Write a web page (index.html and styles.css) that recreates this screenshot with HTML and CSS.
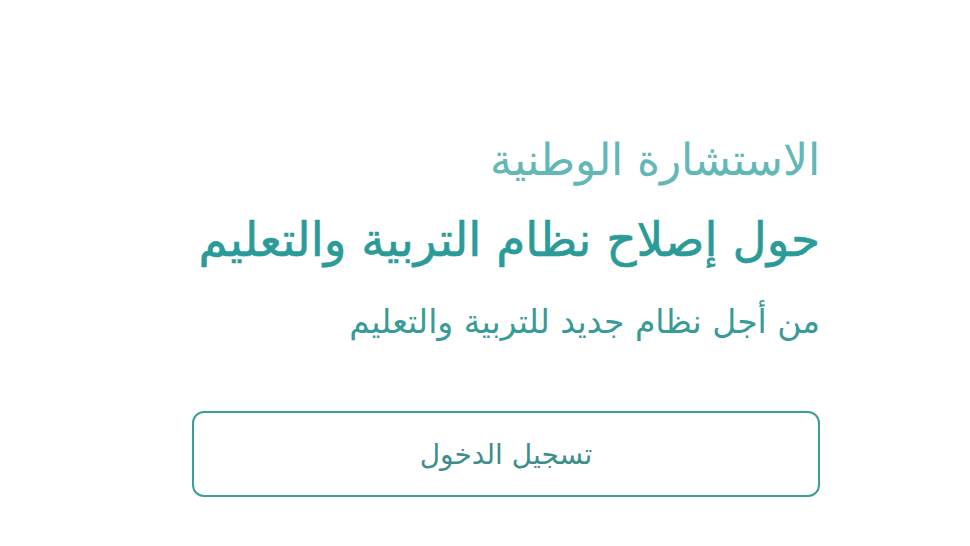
FILE: index.html
```html
<!DOCTYPE html>
<html lang="ar" dir="rtl">
<head>
<meta charset="utf-8">
<link rel="stylesheet" href="styles.css">
</head>
<body>
<main class="hero">
  <h2 class="kicker">الاستشارة الوطنية</h2>
  <h1 class="title">حول إصلاح نظام التربية والتعليم</h1>
  <p class="sub">من أجل نظام جديد للتربية والتعليم</p>
  <a class="login" href="#">تسجيل الدخول</a>
</main>
</body>
</html>
```
FILE: styles.css
```css
html, body {
  margin: 0;
  padding: 0;
  background: #ffffff;
}
body {
  font-family: "DejaVu Sans", "Noto Sans", sans-serif;
  width: 970px;
  height: 546px;
  overflow: hidden;
}
.hero {
  width: 628px;
  margin-right: 150px;
  padding-top: 132px;
  display: flex;
  flex-direction: column;
  align-items: stretch;
  text-align: right;
}
.kicker {
  margin: 0;
  font-size: 44px;
  font-weight: 200;
  line-height: 56px;
  color: #62b7b7;
  white-space: nowrap;
}
.title {
  margin: 24px 0 0;
  font-size: 47px;
  font-weight: 400;
  line-height: 56px;
  color: #2a9b98;
  white-space: nowrap;
  -webkit-text-stroke: 0.6px #2a9b98;
}
.sub {
  margin: 32px 0 0;
  font-size: 33px;
  font-weight: 400;
  line-height: 44px;
  color: #389b98;
  white-space: nowrap;
}
.login {
  margin-top: 67px;
  height: 82px;
  border: 2px solid #3a9e9b;
  border-radius: 12px;
  display: flex;
  align-items: center;
  justify-content: center;
  font-size: 28px;
  color: #3d8e8b;
  text-decoration: none;
}
```
